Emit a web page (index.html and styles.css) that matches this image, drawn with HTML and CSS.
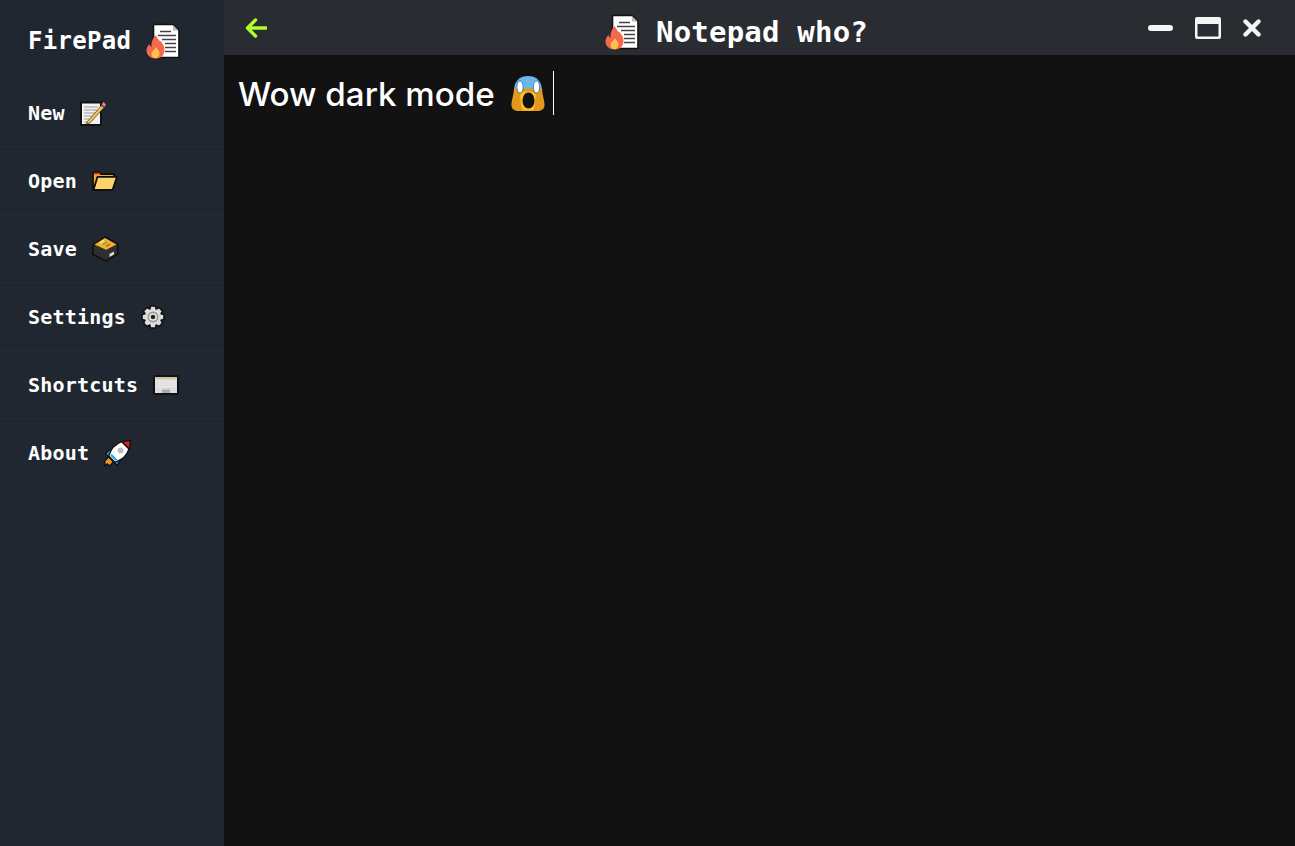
FILE: index.html
```html
<!DOCTYPE html>
<html lang="en">
<head>
    <meta charset="UTF-8">
    <title>FirePad</title>
    <link rel="stylesheet" href="styles.css">
</head>
<body>
    <svg class="defs" width="0" height="0" aria-hidden="true">
        <symbol id="logo" viewBox="0 0 34 36">
            <path d="M7.5 1.5H27L33 7.5V34.5H7.5Z" fill="#fff" stroke="#111" stroke-width="1.6" stroke-linejoin="round"/>
            <path d="M27 2L32.5 7.5H27Z" fill="#bbb"/>
            <path d="M14 8.5H25M12 12.5H30M16 16.5H30M19 20.5H30M19 24.5H30M19 28.5H30" stroke="#444" stroke-width="1.5"/>
            <path d="M10 12C10.5 15 12.5 16 14 18.5C15 18 15.5 18.5 15.8 20C17.5 21.5 18.5 24 18.5 27C18.5 32 15 35.5 9.8 35.5C4.3 35.5 .5 32 .5 27.5C.5 24.5 2 22.5 3.5 21C3.8 22.5 4.5 23.5 5.5 24C5 20 6.5 15 10 12Z" fill="#f4694b"/>
            <path d="M10 24C10.5 26 13.5 27 13.5 30.5C13.5 33.5 11.5 35.2 9.5 35.2C7 35.2 5.5 33.5 5.5 31C5.5 28.5 8.5 27 10 24Z" fill="#fcc14a"/>
        </symbol>
        <symbol id="memo" viewBox="0 0 26 26">
            <path d="M1 2.5H21V25H1Z" fill="#f2f2f2" stroke="#111" stroke-width="2"/>
            <path d="M4 7H18M4 10H17M4 13H15M4 16H12M4 19H9M4 22H8" stroke="#999" stroke-width="1.2"/>
            <path d="M7 22L21.5 5.5L24 7.5L10 23L6.5 24Z" fill="#fcc14a" stroke="#333" stroke-width=".7"/>
            <path d="M21.5 4.5L23.5 2L26 4.5L24.5 7Z" fill="#e8808a"/>
        </symbol>
        <symbol id="folder" viewBox="0 0 26 20">
            <path d="M1 2.5C1 1.5 2 1 3 1H7L9 3H22V7H6L1 19Z" fill="#f0a921" stroke="#111" stroke-width="1.8" stroke-linejoin="round"/>
            <path d="M2 1.5H7L8.5 3.2H2Z" fill="#d6222a"/>
            <path d="M1.5 19L5.5 5.8H25L20.5 19Z" fill="#ffd26e" stroke="#111" stroke-width="1.8" stroke-linejoin="round"/>
        </symbol>
        <symbol id="box" viewBox="0 0 27 26">
            <path d="M13.5 1L26 8.5V18L14 25L1 18.5V9Z" fill="#2f2f2f" stroke="#111" stroke-width="1.6" stroke-linejoin="round"/>
            <path d="M13 2L24.5 8.5L14 13.8L2.5 8.5Z" fill="#f0b429"/>
            <path d="M8 7L12 4.5" stroke="#ffe08a" stroke-width="1.5"/>
            <path d="M11 8.5L15 6" stroke="#5cb85c" stroke-width="1.5"/>
            <path d="M14 10.5L18 8" stroke="#e2574c" stroke-width="1.5"/>
            <path d="M17.5 18L22 15.5V18.5L17.5 21Z" fill="#ddd"/>
        </symbol>
        <symbol id="gear" viewBox="0 0 24 24">
            <path d="M9.5 1H14.5L15.2 4L18 2.5L21.5 6L20 8.8L23 9.5V14.5L20 15.2L21.5 18L18 21.5L15.2 20L14.5 23H9.5L8.8 20L6 21.5L2.5 18L4 15.2L1 14.5V9.5L4 8.8L2.5 6L6 2.5L8.8 4Z" fill="#ddd" stroke="#111" stroke-width="1.6" stroke-linejoin="round"/>
            <circle cx="12" cy="12" r="5.5" fill="#999"/>
            <circle cx="12" cy="12" r="3.8" fill="#eee"/>
            <circle cx="12" cy="12" r="2.3" fill="#222"/>
        </symbol>
        <symbol id="keyboard" viewBox="0 0 26 20">
            <rect x="1" y="1" width="24" height="18" rx="1" fill="#ddd" stroke="#111" stroke-width="2"/>
            <path d="M2 3H24" stroke="#c9c27a" stroke-width="1.5"/>
            <path d="M3 6.5H23M3 9H23M3 11.5H23" stroke="#f5f5f5" stroke-width="1.2" stroke-dasharray="1.6 .8"/>
            <path d="M9 14.5H17V18H9Z" fill="#aaa"/>
        </symbol>
        <symbol id="rocket" viewBox="0 0 26 26">
            <path d="M3 23L1 25.5L.8 20L4.5 16.5L9 21L5.5 25Z" fill="#f7931e" stroke="#111" stroke-width="1.3" stroke-linejoin="round"/>
            <path d="M6 9L1.5 13L5 16.5M16 19.5L12.5 24.5L9 20.5" fill="#1ba6e8" stroke="#111" stroke-width="1.3"/>
            <path d="M4.5 15.5C6.5 8.5 11.5 3.5 17 1.5L24 8.5C22.5 14 17.5 19 10.5 21.5Z" fill="#fff" stroke="#111" stroke-width="1.3" stroke-linejoin="round"/>
            <path d="M17 1.5L25.5 .5L24.5 9Z" fill="#dd1f2d" stroke="#111" stroke-width="1.3" stroke-linejoin="round"/>
            <path d="M6 15L11 20L13 19L7.5 13.5Z" fill="#1ba6e8"/>
            <circle cx="16" cy="10" r="2.8" fill="#bbb"/>
        </symbol>
        <symbol id="scream" viewBox="0 0 40 41">
            <path d="M20 0C31 0 37 7 37 17V25C39.5 28 40.5 32 38.5 36.5C37 40 33 41 29 41H11C7 41 3 40 1.5 36.5C-.5 32 .5 28 3 25V17C3 7 9 0 20 0Z" fill="#111"/>
            <path d="M20 3C29 3 34 9 34 18V25H6V18C6 9 11 3 20 3Z" fill="#6db7e8"/>
            <path d="M6 15.5C12 15.5 28 15.5 34 15.5C34.5 24 37 28 36.5 33C36 37 32 38 30 38H10C8 38 4 37 3.5 33C3 28 5.5 24 6 15.5Z" fill="#e2981c"/>
            <path d="M12 22C13 28 12.5 34 15 37.5H25C27.5 34 27 28 28 22C25 17 15 17 12 22Z" fill="#fcc21b"/>
            <ellipse cx="20.5" cy="27.5" rx="6" ry="8" fill="#111"/>
            <ellipse cx="12" cy="14" rx="3.2" ry="6" fill="#fff" stroke="#3b7fc4" stroke-width="1"/>
            <ellipse cx="28.5" cy="14" rx="3.2" ry="6" fill="#fff" stroke="#3b7fc4" stroke-width="1"/>
        </symbol>
    </svg>

    <div class="app">
        <nav class="sidebar">
            <div class="brand">
                <span>FirePad</span>
                <svg class="logo-icon"><use href="#logo"/></svg>
            </div>
            <a class="nav-item"><span>New</span><svg class="icon-memo"><use href="#memo"/></svg></a>
            <a class="nav-item"><span>Open</span><svg class="icon-folder"><use href="#folder"/></svg></a>
            <a class="nav-item"><span>Save</span><svg class="icon-box"><use href="#box"/></svg></a>
            <a class="nav-item"><span>Settings</span><svg class="icon-gear"><use href="#gear"/></svg></a>
            <a class="nav-item"><span>Shortcuts</span><svg class="icon-keyboard"><use href="#keyboard"/></svg></a>
            <a class="nav-item"><span>About</span><svg class="icon-rocket"><use href="#rocket"/></svg></a>
        </nav>
        <main class="main">
            <header class="titlebar">
                <svg class="back" viewBox="0 0 22 20"><path d="M10.5 2L2.5 10L10.5 18M3 10H21" fill="none" stroke="#adff2f" stroke-width="3.4" stroke-linecap="round" stroke-linejoin="round"/></svg>
                <div class="title">
                    <svg class="logo-icon"><use href="#logo"/></svg>
                    <span>Notepad who?</span>
                </div>
                <div class="controls">
                    <svg class="ctl-min" viewBox="0 0 25 6"><rect width="25" height="6" rx="3" fill="#f5f5f5"/></svg>
                    <svg class="ctl-max" viewBox="0 0 26 22"><path d="M2 0H24A2 2 0 0 1 26 2V20A2 2 0 0 1 24 22H2A2 2 0 0 1 0 20V2A2 2 0 0 1 2 0ZM2.5 7V19.5H23.5V7Z" fill="#f5f5f5" fill-rule="evenodd"/></svg>
                    <svg class="ctl-close" viewBox="0 0 18 18"><path d="M2.5 2.5L15.5 15.5M15.5 2.5L2.5 15.5" stroke="#f5f5f5" stroke-width="4.4" stroke-linecap="round"/></svg>
                </div>
            </header>
            <section class="editor">
                <span class="editor-text">Wow dark mode</span>
                <svg class="icon-scream"><use href="#scream"/></svg>
                <span class="caret"></span>
            </section>
        </main>
    </div>
</body>
</html>
```

FILE: styles.css
```css
* {
    box-sizing: border-box;
}
html, body {
    margin: 0;
    height: 100%;
    overflow: hidden;
}
body {
    background-color: #121212;
    color: #fff;
    font-family: "DejaVu Sans Mono", monospace;
    font-weight: bold;
}
.defs {
    position: absolute;
}
.app {
    display: flex;
    height: 100vh;
}
.sidebar {
    width: 224px;
    flex-shrink: 0;
    background-color: #212731;
}
.brand {
    display: flex;
    align-items: center;
    gap: 15px;
    height: 79px;
    padding: 3px 0 0 28px;
    font-size: 24px;
    letter-spacing: .3px;
}
.nav-item {
    display: flex;
    align-items: center;
    gap: 15px;
    height: 68px;
    padding-left: 28px;
    font-size: 20px;
    letter-spacing: .2px;
    border-bottom: 1px solid #272d37;
}
.nav-item:last-child {
    border-bottom: none;
}
.logo-icon {
    width: 34px;
    height: 36px;
}
.icon-memo { width: 26px; height: 26px; }
.icon-folder { width: 26px; height: 20px; }
.icon-box { width: 27px; height: 26px; }
.icon-gear { width: 24px; height: 24px; }
.icon-keyboard { width: 26px; height: 20px; }
.icon-rocket { width: 27px; height: 27px; }
.main {
    flex: 1;
    display: flex;
    flex-direction: column;
}
.titlebar {
    display: flex;
    align-items: center;
    justify-content: space-between;
    height: 55px;
    padding: 0 34px 0 21px;
    background-color: #292c31;
}
.back {
    width: 22px;
    height: 20px;
}
.title {
    display: flex;
    align-items: center;
    gap: 17px;
    margin-left: 58px;
    padding-top: 9px;
    font-size: 29px;
    letter-spacing: .2px;
}
.controls {
    display: flex;
    align-items: center;
    gap: 22px;
}
.ctl-min { width: 25px; height: 6px; }
.ctl-max { width: 26px; height: 22px; }
.ctl-close { width: 18px; height: 18px; }
.editor {
    flex: 1;
    display: flex;
    align-items: flex-start;
    padding: 16px 14px;
    background-color: #121212;
    font-family: Inter, sans-serif;
    font-weight: 500;
    font-size: 33.15px;
    line-height: 44px;
}
.editor-text {
    padding-top: 1px;
}
.icon-scream {
    width: 40px;
    height: 41px;
    margin: 2px 5px 0 13px;
}
.caret {
    width: 1px;
    height: 44px;
    background-color: #fff;
}
```
